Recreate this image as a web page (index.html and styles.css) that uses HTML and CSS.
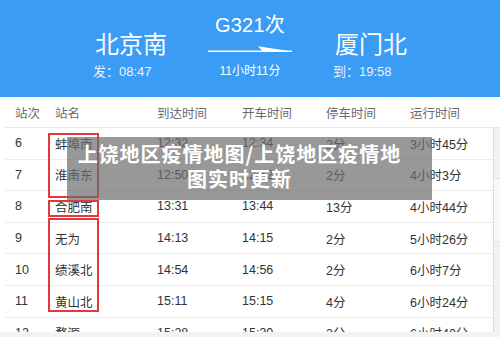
FILE: index.html
```html
<!DOCTYPE html>
<html lang="zh">
<head>
<meta charset="utf-8">
<title>G321次 时刻表</title>
<link rel="stylesheet" href="styles.css">
</head>
<body>
<div class="page">
  <header class="trip">
    <div class="stn from">
      <div class="name">北京南</div>
      <div class="time">发：08:47</div>
    </div>
    <div class="train">
      <div class="code">G321次</div>
      <svg class="arrow" width="84" height="10" viewBox="0 0 84 10">
        <line x1="0" y1="7.2" x2="84" y2="7.2" stroke="#fff" stroke-width="1.6"/>
        <polygon points="50,2.2 84,7.6 55,7.6" fill="#fff"/>
      </svg>
      <div class="dur">11小时11分</div>
    </div>
    <div class="stn to">
      <div class="name">厦门北</div>
      <div class="time">到：19:58</div>
    </div>
  </header>

  <section class="table">
    <div class="row thead">
      <span>站次</span><span>站名</span><span>到达时间</span><span>开车时间</span><span>停车时间</span><span>运行时间</span>
    </div>
    <div class="body-wrap">
      <div class="tbody">
        <div class="row"><span>6</span><span>蚌埠南</span><span>12:32</span><span>12:34</span><span>2分</span><span>3小时45分</span></div>
        <div class="row"><span>7</span><span>淮南东</span><span>12:50</span><span>12:52</span><span>2分</span><span>4小时3分</span></div>
        <div class="row"><span>8</span><span>合肥南</span><span>13:31</span><span>13:44</span><span>13分</span><span>4小时44分</span></div>
        <div class="row"><span>9</span><span>无为</span><span>14:13</span><span>14:15</span><span>2分</span><span>5小时26分</span></div>
        <div class="row"><span>10</span><span>绩溪北</span><span>14:54</span><span>14:56</span><span>2分</span><span>6小时7分</span></div>
        <div class="row"><span>11</span><span>黄山北</span><span>15:11</span><span>15:15</span><span>4分</span><span>6小时24分</span></div>
        <div class="row"><span>12</span><span>婺源</span><span>15:28</span><span>15:30</span><span>2分</span><span>6小时40分</span></div>
      </div>
      <div class="scroll"><div class="thumb"></div></div>
    </div>

    <div class="mark m1"></div>
    <div class="mark m2"></div>
    <div class="mark m3"></div>

    <div class="caption">上饶地区疫情地图/上饶地区疫情地图实时更新</div>
  </section>
</div>
</body>
</html>
```

FILE: styles.css
```css
* { box-sizing: border-box; }

html, body {
  margin: 0;
  padding: 0;
}

body {
  background: #f3f3f3;
  font-family: "Liberation Sans", "Noto Sans CJK SC", sans-serif;
  width: 500px;
  height: 337px;
  overflow: hidden;
}

.page {
  position: relative;
  width: 500px;
  height: 332px;
  overflow: hidden;
  background: #fff;
}

/* ---------- header ---------- */
.trip {
  height: 97px;
  background: #3b9cf5;
  color: #fff;
  display: flex;
  padding-left: 93px;
}

.stn {
  display: flex;
  flex-direction: column;
  padding-top: 31px;
}

.stn.from { width: 114px; }
.stn.to { margin-left: 40px; }

.stn .name {
  font-size: 24px;
  line-height: 28px;
  padding-left: 2px;
}

.stn .time {
  margin-top: 5px;
  font-size: 13px;
  line-height: 16px;
  color: #eaf4ff;
}

.train {
  width: 86px;
  display: flex;
  flex-direction: column;
  align-items: center;
  padding-top: 13px;
}

.train .code {
  font-size: 20px;
  line-height: 24px;
  letter-spacing: 0.2px;
}

.train .arrow {
  display: block;
  margin-top: 7px;
}

.train .dur {
  margin-top: 9px;
  font-size: 12px;
  line-height: 16px;
}

/* ---------- table ---------- */
.table {
  font-size: 12.5px;
  color: #333;
}

.row {
  display: grid;
  grid-template-columns: 40px 102px 85px 84px 84px 1fr;
  align-items: center;
  margin-left: 5px;
  padding-left: 10px;
  border-bottom: 1px solid #ececec;
  height: 31.6px;
}

.thead {
  height: 31px;
  color: #6a6a6a;
  border-bottom: 1px solid #eaeaea;
}

.body-wrap {
  display: flex;
}

.tbody {
  flex: 1;
}

.scroll {
  width: 7px;
  border-left: 1px solid #dcdcdc;
  background: #f1f1f1;
  padding-top: 50px;
}

.thumb {
  height: 64px;
  background: #f8f8f8;
  border-top: 1px solid #e2e2e2;
  border-bottom: 1px solid #e2e2e2;
}

/* red annotation boxes */
.mark {
  position: absolute;
  left: 48px;
  width: 51px;
  border: 2px solid #e4393c;
}

.m1 { top: 133px; height: 65px; }
.m2 { top: 200px; height: 17px; }
.m3 { top: 218px; height: 94px; }

/* caption overlay */
.caption {
  position: absolute;
  left: 67px;
  top: 137px;
  width: 365px;
  height: 63px;
  padding: 5px 28px 0 8px;
  background: rgba(108, 108, 108, 0.7);
  color: #fff;
  font-family: "Noto Sans CJK SC", sans-serif;
  font-weight: 700;
  font-size: 20px;
  line-height: 24.5px;
  letter-spacing: 1px;
  text-align: center;
}
```
